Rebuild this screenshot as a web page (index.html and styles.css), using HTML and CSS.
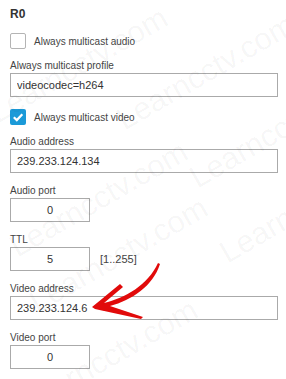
FILE: index.html
```html
<!DOCTYPE html>
<html lang="en">
<head>
  <meta charset="UTF-8" />
  <meta name="viewport" content="width=device-width, initial-scale=1.0"/>
  <title>Multicast — R0</title>
  <link rel="stylesheet" href="styles.css">
</head>
<body>
  <div class="panel">
    <h2 class="title">R0</h2>

    <label class="check">
      <span class="box"></span>
      <span class="check-text">Always multicast audio</span>
    </label>

    <div class="field">
      <div class="field-label">Always multicast profile</div>
      <input class="text wide" type="text" value="videocodec=h264">
    </div>

    <label class="check">
      <span class="box checked">
        <svg width="16" height="16" viewBox="0 0 16 16"><path d="M3.8 8.2 L6.8 11.1 L12.3 5.2" fill="none" stroke="#fff" stroke-width="2.2"/></svg>
      </span>
      <span class="check-text">Always multicast video</span>
    </label>

    <div class="field gap-top">
      <div class="field-label">Audio address</div>
      <input class="text wide" type="text" value="239.233.124.134">
    </div>

    <div class="field">
      <div class="field-label">Audio port</div>
      <input class="text short" type="text" value="0">
    </div>

    <div class="field">
      <div class="field-label">TTL</div>
      <div class="inline">
        <input class="text short" type="text" value="5">
        <span class="range">[1..255]</span>
      </div>
    </div>

    <div class="field">
      <div class="field-label">Video address</div>
      <input class="text wide" type="text" value="239.233.124.6">
    </div>

    <div class="field">
      <div class="field-label">Video port</div>
      <input class="text short" type="text" value="0">
    </div>
  </div>

  <!-- arrow drawn over the screenshot -->
  <svg class="arrow" width="286" height="379" viewBox="0 0 286 379">
    <path d="M92,307 L120,284 L123,287 L104,303 C125,298 148,285 158,263 L160,264 C153,286 132,300 110,306 L143,317 L141,319 L95,309 Z" fill="#e10a0a"/>
  </svg>

  <div class="watermark">
    <span style="left:0px;top:128px">Learncctv.com</span>
    <span style="left:127px;top:135px">Learncctv.com</span>
    <span style="left:20px;top:262px">Learncctv.com</span>
    <span style="left:200px;top:193px">Learncctv.com</span>
    <span style="left:40px;top:318px">Learncctv.com</span>
    <span style="left:230px;top:268px">Learncctv.com</span>
    <span style="left:30px;top:420px">Learncctv.com</span>
  </div>
</body>
</html>
```

FILE: styles.css
```css
html, body {
  margin: 0;
  background: #fff;
}

body {
  font-family: "Liberation Sans", Arial, sans-serif;
  color: #333;
  position: relative;
  width: 286px;
  height: 379px;
  overflow: hidden;
}

.panel {
  padding: 7px 10px 0 10px;
}

.title {
  margin: 0 0 12px;
  font-size: 12px;
  line-height: 14px;
  font-weight: bold;
  color: #333;
}

.check {
  display: flex;
  align-items: center;
  height: 16px;
  margin-bottom: 11px;
}

.box {
  width: 14px;
  height: 14px;
  border: 1px solid #b4b4b4;
  border-radius: 2px;
  background: #fff;
  display: block;
}

.box.checked {
  width: 16px;
  height: 16px;
  border: none;
  background: #1b9ad8;
}

.box svg {
  display: block;
}

.check-text {
  margin-left: 8px;
  font-size: 10px;
  color: #444;
}

.field {
  margin-bottom: 12px;
}

.field-label {
  font-size: 10px;
  line-height: 12px;
  margin-bottom: 1px;
  color: #444;
}

.text {
  box-sizing: border-box;
  height: 24px;
  border: 1px solid #aaa;
  border-radius: 0;
  padding: 0 6px;
  font-family: "Liberation Sans", Arial, sans-serif;
  font-size: 11px;
  color: #333;
  background: #fff;
  outline: none;
  margin: 0;
  display: block;
}

.wide {
  width: 268px;
}

.short {
  width: 80px;
  text-align: center;
}

.inline {
  display: flex;
  align-items: center;
}

.range {
  margin-left: 10px;
  font-size: 11px;
  color: #444;
}

.arrow {
  position: absolute;
  left: 0;
  top: 0;
  pointer-events: none;
}

.watermark {
  position: absolute;
  inset: 0;
  pointer-events: none;
}

.watermark span {
  position: absolute;
  font-size: 31px;
  line-height: 1;
  color: rgba(0, 0, 0, 0.045);
  white-space: nowrap;
  transform-origin: 0 100%;
  transform: translateY(-100%) rotate(-30deg);
}
```
